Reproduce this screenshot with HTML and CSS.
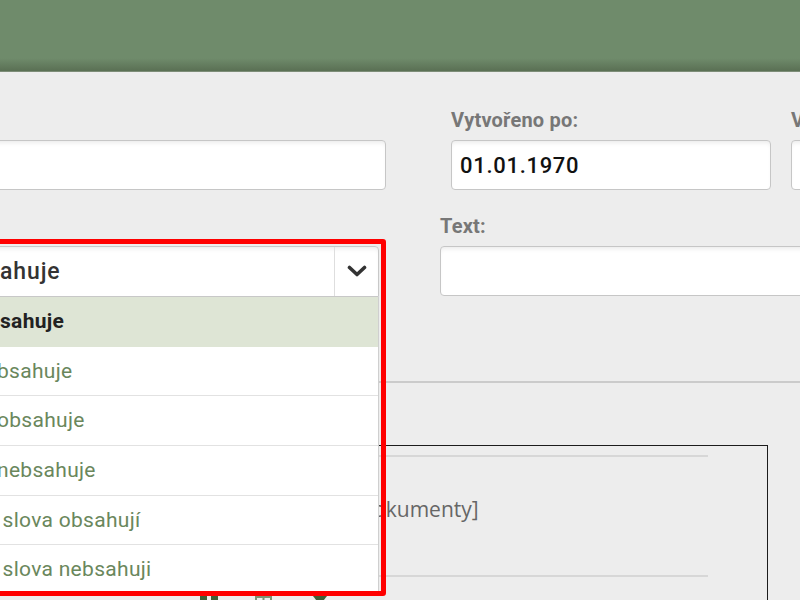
FILE: index.html
```html
<!DOCTYPE html>
<html lang="cs">
<head>
<meta charset="utf-8">
<title>Hledání</title>
<link rel="stylesheet" href="styles.css">
</head>
<body>
<div class="header"></div>
<div class="content">
  <div class="row row-top">
    <div class="field field-a">
      <input class="input" type="text" value="">
    </div>
    <div class="field field-b">
      <label class="lbl">Vytvořeno po:</label>
      <input class="input input-date" type="text" value="01.01.1970">
    </div>
    <div class="field field-c">
      <label class="lbl">Vytvořeno do:</label>
      <input class="input input-date" type="text" value="">
    </div>
  </div>
  <div class="row row-second">
    <div class="combo">
      <div class="select">
        <span class="select-text">ahuje</span>
        <span class="select-btn">
          <svg width="20" height="12" viewBox="0 0 20 12"><path d="M2.5 2.5 L10 9.5 L17.5 2.5" fill="none" stroke="#333" stroke-width="3.6" stroke-linecap="round" stroke-linejoin="round"/></svg>
        </span>
      </div>
      <ul class="options">
        <li class="opt opt-active">sahuje</li>
        <li class="opt">bsahuje</li>
        <li class="opt">obsahuje</li>
        <li class="opt">nebsahuje</li>
        <li class="opt"> slova obsahují</li>
        <li class="opt"> slova nebsahuji</li>
      </ul>
      <div class="annot"></div>
    </div>
    <div class="field field-text">
      <label class="lbl">Text:</label>
      <input class="input" type="text" value="">
    </div>
  </div>
  <div class="divider"></div>
  <div class="results">
    <div class="rule"></div>
    <div class="doc-row">[Dokumenty]</div>
    <div class="rule"></div>
    <div class="icons">
      <svg class="ic ic-1" width="18" height="18" viewBox="0 0 18 18"><path d="M0 0 H7 V4 H11 V0 H18 V18 H0 Z" fill="#3f5f36"/></svg>
      <svg class="ic ic-2" width="17" height="18" viewBox="0 0 17 18"><rect x="1" y="1" width="15" height="16" fill="none" stroke="#7d9474" stroke-width="2"/><path d="M8.5 1 V6" stroke="#7d9474" stroke-width="2"/></svg>
      <svg class="ic ic-3" width="14" height="18" viewBox="0 0 14 18"><path d="M0 0 L7 9 L14 0 Z" fill="#3f5f36"/><rect x="5.5" y="8" width="3" height="9" fill="#3f5f36"/></svg>
    </div>
  </div>
</div>
</body>
</html>
```

FILE: styles.css
```css
* {
  box-sizing: border-box;
}

html,
body {
  margin: 0;
  padding: 0;
}

body {
  width: 800px;
  height: 600px;
  overflow: hidden;
  background: #ededed;
  font-family: Roboto, "Noto Sans", "DejaVu Sans", sans-serif;
}

.header {
  height: 72px;
  background: linear-gradient(to bottom, #6f8b6b 0, #6f8b6b 82%, #5b7155 99%);
  border-bottom: 1px solid #7d8d78;
}

.content {
  margin-left: -14px;
  width: 1200px;
}

.row {
  display: flex;
}

.row-top {
  margin-top: 36px;
  align-items: flex-end;
}

.field {
  display: flex;
  flex-direction: column;
}

.field-a {
  width: 400px;
  margin-right: 65px;
}

.field-b {
  width: 320px;
  margin-right: 20px;
}

.field-c {
  width: 320px;
}

.lbl {
  display: block;
  height: 24px;
  line-height: 24px;
  margin-bottom: 8px;
  font-size: 20px;
  font-weight: 700;
  color: #777;
  letter-spacing: 0.2px;
  white-space: nowrap;
}

.input {
  display: block;
  width: 100%;
  height: 50px;
  margin: 0;
  padding: 0 0 0 8px;
  background: #fff;
  border: 1px solid #c6c6c6;
  border-radius: 4px;
  box-shadow: inset 0 4px 4px -2px rgba(0, 0, 0, 0.08);
  font-family: Roboto, "Noto Sans", sans-serif;
  font-size: 22px;
  color: #111;
  outline: none;
}

.input-date {
  letter-spacing: 0.7px;
  font-weight: 500;
}

.row-second {
  margin-top: 24px;
  align-items: flex-start;
}

.combo {
  position: relative;
  z-index: 2;
  width: 393px;
  margin-top: 32px;
  margin-right: 61px;
}

.field-text {
  width: 600px;
}

.select {
  display: flex;
  height: 51px;
  background: #fff;
  border: 1px solid #c8c8c8;
  border-radius: 4px 4px 0 0;
  box-shadow: inset 0 4px 4px -2px rgba(0, 0, 0, 0.08);
}

.select-text {
  flex: 1;
  padding-left: 13px;
  line-height: 49px;
  font-size: 23px;
  font-weight: 500;
  color: #333;
  letter-spacing: 0.9px;
}

.select-btn {
  width: 44px;
  border-left: 1px solid #dedede;
  display: flex;
  align-items: center;
  justify-content: center;
  padding-bottom: 2px;
}

.options {
  position: absolute;
  top: 51px;
  left: 0;
  right: 0;
  margin: 0;
  padding: 0;
  list-style: none;
  background: #fff;
  border: 1px solid #cfcfcf;
  border-top: 0;
}

.opt {
  height: 49.67px;
  line-height: 48.67px;
  padding-left: 10px;
  border-bottom: 1px solid #e2e2e2;
  font-size: 21px;
  letter-spacing: 0.3px;
  color: #6a875c;
  white-space: pre;
}

.opt-active {
  background: #dee5d5;
  border-bottom-color: #dee5d5;
  padding-left: 13px;
  font-weight: 700;
  color: #222;
}

.annot {
  position: absolute;
  top: -7px;
  left: -20px;
  right: -7px;
  height: 357px;
  border: 5px solid #ff0000;
  border-radius: 3px;
  pointer-events: none;
}

.divider {
  height: 2px;
  margin-top: 84px;
  background: #cbcbcb;
}

.results {
  width: 782px;
  height: 300px;
  margin-top: 62px;
  padding: 9px 59px 0 0;
  border: 1px solid #1c1c1c;
}

.rule {
  height: 2px;
  background: #d7d7d7;
}

.doc-row {
  height: 118px;
  padding-top: 37px;
  padding-left: 364px;
  font-family: "Open Sans", "Noto Sans", sans-serif;
  font-size: 21px;
  line-height: 30px;
  color: #666;
}

.icons {
  display: flex;
  align-items: flex-start;
  margin-top: 19px;
  padding-left: 213px;
}

.ic-2 {
  margin-left: 37px;
}

.ic-3 {
  margin-left: 41px;
}
```
